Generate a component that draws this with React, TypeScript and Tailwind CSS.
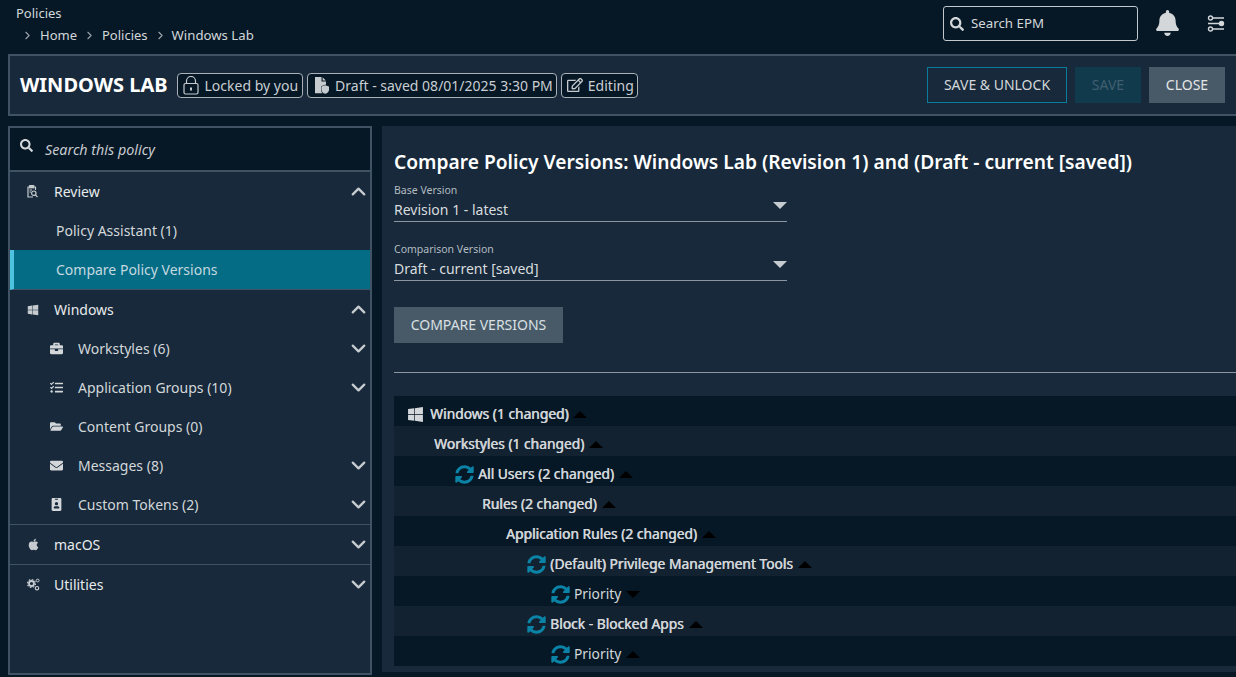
import React from "react";
import { ChevronUp, ChevronDown, ChevronRight } from "lucide-react";
import { FaWindows, FaApple, FaSyncAlt, FaBell, FaBriefcase, FaFolderOpen, FaEnvelope, FaIdBadge, FaTasks, FaSearch, FaRegEdit } from "react-icons/fa";

const FileShield = () => (
  <svg width="15" height="17" viewBox="0 0 15 17" fill="#c6cbcf">
    <path d="M1 0h6.500v4.500H12V7.400L7 9.200v3.200c0 1.700.700 3 1.700 3.900H1z" />
    <path d="M8.600 0.200L11.800 3.400H8.600z" />
    <path d="M11.200 8.200l3.800 1.400v2.800c0 2-1.500 3.600-3.800 4.400-2.300-.800-3.800-2.400-3.800-4.400V9.600z" />
  </svg>
);

const LockIcon = () => (
  <svg width="16" height="19" viewBox="0 0 16 19" fill="none" stroke="#c6cbcf" strokeWidth="1.200">
    <rect x="1" y="7.500" width="14" height="10.500" rx="1.500" />
    <path d="M3.500 7.500V5a4.500 4.500 0 0 1 9 0v2.500" />
    <path d="M8 11.500v3" strokeWidth="2" />
  </svg>
);

const ReviewIcon = () => (
  <svg width="11" height="13" viewBox="0 0 11 13" fill="none" stroke="#c6cbcf" strokeWidth="1.200">
    <path d="M6 12H1V2h7.500v3" />
    <rect x="2.700" y="0.500" width="4" height="2.300" fill="#c6cbcf" />
    <path d="M2.500 5H5M2.500 7H4" strokeWidth="1" />
    <circle cx="6.800" cy="8.200" r="2.200" />
    <path d="M8.400 9.800L10.500 12" />
  </svg>
);

const GearsIcon = () => (
  <svg width="13" height="13" viewBox="0 0 13 13" fill="none" stroke="#c6cbcf">
    <circle cx="4.500" cy="5.500" r="2.500" strokeWidth="1.800" />
    <circle cx="4.500" cy="5.500" r="4" strokeWidth="1.200" strokeDasharray="1.600 1.500" />
    <circle cx="10.700" cy="2.500" r="1.400" strokeWidth="1" />
    <circle cx="10" cy="10.200" r="1.700" strokeWidth="1.200" />
  </svg>
);

const Sync = () => <FaSyncAlt className="text-[#0b83a6] w-[19px] h-[19px] shrink-0" />;

const Caret = ({ up = true }: { up?: boolean }) => (
  <span className={up ? "ml-[5px] w-0 h-0 border-x-[7px] border-x-transparent border-b-[7px] border-b-black" : "ml-[5px] w-0 h-0 border-x-[7px] border-x-transparent border-t-[7px] border-t-black"} />
);

const Badge = ({ icon, text, tight }: { icon: React.ReactNode; text: string; tight?: boolean }) => (
  <div className={(tight ? "pr-[3px] " : "pr-[4px] ") + "h-[25px] flex items-center gap-[5px] pl-[5px] bg-[#061726] border border-[#aab1b7] rounded-[4px] text-[14px] text-[#c9ced2]"}>
    {icon}
    <span>{text}</span>
  </div>
);

const Chevron = ({ up }: { up?: boolean }) =>
  up ? (
    <ChevronUp size={23} strokeWidth={2.400} className="text-[#c6cbcf]" />
  ) : (
    <ChevronDown size={23} strokeWidth={2.400} className="text-[#c6cbcf]" />
  );

const Section = ({ icon, label, open }: { icon: React.ReactNode; label: string; open?: boolean }) => (
  <div className="h-[39px] flex items-center text-[14px] text-[#e8ebed]">
    <span className="w-[44px] pl-[17px] flex justify-start text-[#c6cbcf]">{icon}</span>
    <span className="flex-1">{label}</span>
    <Chevron up={open} />
  </div>
);

const Item = ({ icon, label, chevron }: { icon: React.ReactNode; label: string; chevron?: boolean }) => (
  <div className="h-[39px] flex items-center text-[14px] text-[#d3d7da]">
    <span className="w-[68px] pl-[40px] flex text-[#d3d7da]">{icon}</span>
    <span className="flex-1">{label}</span>
    {chevron && <Chevron />}
  </div>
);

const rows: { pad: string; label: string; sync?: boolean; win?: boolean; bold?: boolean; up?: boolean }[] = [
  { pad: "pl-[13px]", label: "Windows (1 changed)", win: true, bold: true, up: true },
  { pad: "pl-[40px]", label: "Workstyles (1 changed)", bold: true, up: true },
  { pad: "pl-[61px]", label: "All Users (2 changed)", sync: true, bold: true, up: true },
  { pad: "pl-[88px]", label: "Rules (2 changed)", bold: true, up: true },
  { pad: "pl-[112px]", label: "Application Rules (2 changed)", bold: true, up: true },
  { pad: "pl-[133px]", label: "(Default) Privilege Management Tools", sync: true, bold: true, up: true },
  { pad: "pl-[157px]", label: "Priority", sync: true, up: false },
  { pad: "pl-[133px]", label: "Block - Blocked Apps", sync: true, bold: true, up: true },
  { pad: "pl-[157px]", label: "Priority", sync: true, up: true },
];

const Select = ({ label, value }: { label: string; value: string }) => (
  <div className="w-[393px] border-b border-[#8b96a0] relative h-[38px]">
    <div className="text-[10.500px] leading-[13px] h-[16px] text-[#b4bbc1]">{label}</div>
    <div className="text-[14px] leading-[20px] text-[#d9dcdf]">{value}</div>
    <span className="absolute right-0 top-[18px] w-0 h-0 border-x-[7px] border-x-transparent border-t-[7px] border-t-[#c6cbcf]" />
  </div>
);

export default function App() {
  return (
    <div className="w-[1236px] h-[677px] overflow-hidden bg-[#061726] flex flex-col" style={{ fontFamily: '"Noto Sans", sans-serif' }}>
      <header className="h-[54px] shrink-0 flex justify-between pl-[16px]">
        <div className="text-[13px] text-[#d3d7da]">
          <div className="pt-[4px] leading-[18px]">Policies</div>
          <div className="flex items-center pl-[5px] pt-[3px] leading-[20px]">
            <ChevronRight size={13} className="text-[#9aa3ab]" />
            <span className="ml-[6px]">Home</span>
            <ChevronRight size={13} className="ml-[6px] text-[#9aa3ab]" />
            <span className="ml-[6px]">Policies</span>
            <ChevronRight size={13} className="ml-[6px] text-[#9aa3ab]" />
            <span className="ml-[5px] text-[13.200px]">Windows Lab</span>
          </div>
        </div>
        <div className="flex items-start">
          <div className="mt-[6px] w-[195px] h-[35px] border border-[#c3c8cc] rounded-[3px] flex items-center pl-[6px] gap-[7px] text-[13.300px] text-[#d3d7da]">
            <FaSearch className="w-[14px] h-[14px] text-[#d3d7da]" />
            <span>Search EPM</span>
          </div>
          <FaBell className="ml-[18px] mt-[10px] w-[23px] h-[26px] text-[#d3d7da]" />
          <svg className="ml-[28px] mt-[15px]" width="18" height="17" viewBox="0 0 18 17" fill="none" stroke="#d3d7da" strokeWidth="1.400">
            <path d="M6 3h11M1 8.500h11M6 14h11" />
            <circle cx="3.500" cy="3" r="2" fill="#061726" />
            <circle cx="14.500" cy="8.500" r="2" fill="#d3d7da" />
            <circle cx="3.500" cy="14" r="2" fill="#061726" />
          </svg>
          <div className="w-[11px]" />
        </div>
      </header>

      <div className="ml-[8px] h-[62px] shrink-0 bg-[#17293a] border-y-2 border-l-2 border-[#3f5364] flex items-center justify-between pl-[10px]">
        <div className="flex items-center">
          <h1 className="text-[20px] font-bold text-white mr-[9px]">WINDOWS LAB</h1>
          <div className="flex gap-[4px]">
            <Badge icon={<span className="w-[17px] flex justify-center"><LockIcon /></span>} text="Locked by you" />
            <Badge tight icon={<span className="w-[17px] flex justify-center"><FileShield /></span>} text="Draft - saved 08/01/2025 3:30 PM" />
            <Badge tight icon={<FaRegEdit className="w-[16px] h-[16px] text-[#c6cbcf]" />} text="Editing" />
          </div>
        </div>
        <div className="flex items-center text-[14px] mr-[11px]">
          <div className="h-[36px] w-[140px] pb-[1px] flex items-center justify-center border border-[#0b7c9c] text-[#d3d7da]">SAVE &amp; UNLOCK</div>
          <div className="h-[36px] w-[66px] pb-[1px] ml-[8px] flex items-center justify-center bg-[#123a4d] text-[#3f5f70]">SAVE</div>
          <div className="h-[36px] w-[76px] pb-[1px] ml-[8px] flex items-center justify-center bg-[#485a68] text-[#e3e6e8]">CLOSE</div>
        </div>
      </div>

      <div className="flex mt-[10px] ml-[8px] flex-1 min-h-0 items-start">
        <aside className="w-[364px] h-[549px] shrink-0 border-2 border-[#3f5364] bg-[#17293a]">
          <div className="h-[44px] bg-[#061726] border-b-2 border-[#3f5364] flex items-start pt-[11px] pl-[10px] text-[14.300px] italic text-[#c6cbcf]">
            <FaSearch className="w-[13px] h-[13px] text-[#d3d7da]" />
            <span className="ml-[12px] pt-[1px] leading-[20px]">Search this policy</span>
          </div>
          <Section icon={<ReviewIcon />} label="Review" open />
          <div className="h-[39px] flex items-center pl-[46px] text-[14px] text-[#d3d7da]">Policy Assistant (1)</div>
          <div className="h-[40px] flex items-center pl-[42px] text-[14px] text-[#c4d9e0] bg-[#056c85] border-l-[4px] border-[#4ec3e0] border-b border-b-[#3f5364]">Compare Policy Versions</div>
          <Section icon={<FaWindows size={12} />} label="Windows" open />
          <Item icon={<FaBriefcase size={13} />} label="Workstyles (6)" chevron />
          <Item icon={<FaTasks size={13} />} label="Application Groups (10)" chevron />
          <Item icon={<FaFolderOpen size={13} />} label="Content Groups (0)" />
          <Item icon={<FaEnvelope size={13} />} label="Messages (8)" chevron />
          <div className="border-b border-[#3f5364]">
            <Item icon={<FaIdBadge size={13} />} label="Custom Tokens (2)" chevron />
          </div>
          <div className="border-b border-[#3f5364]">
            <Section icon={<FaApple size={13} />} label="macOS" />
          </div>
          <Section icon={<GearsIcon />} label="Utilities" />
        </aside>

        <main className="ml-[10px] flex-1 h-[546px] bg-[#17293a] pl-[12px]">
          <h2 className="text-[19.200px] font-semibold text-white leading-[26px] mt-[23px] whitespace-nowrap">Compare Policy Versions: Windows Lab (Revision 1) and (Draft - current [saved])</h2>
          <div className="mt-[9px]"><Select label="Base Version" value="Revision 1 - latest" /></div>
          <div className="mt-[21px]"><Select label="Comparison Version" value="Draft - current [saved]" /></div>
          <div className="mt-[26px] w-[169px] h-[36px] pb-[1px] bg-[#485a68] flex items-center justify-center text-[14px] text-[#d9e0e4]">COMPARE VERSIONS</div>
          <div className="mt-[29px] h-px bg-[#8b96a0]" />
          <div className="mt-[23px]">
            {rows.map((r, i) => (
              <div key={i} className={(i % 2 === 0 ? "bg-[#061726] " : "bg-[#132231] ") + "h-[30px] pt-[6px] flex items-center text-[13.800px] text-[#d3d7da] " + r.pad + (r.bold ? " [text-shadow:0.6px_0_0_#d3d7da]" : "")}>
                {r.win && <FaWindows className="w-[17px] h-[17px] mr-[6px] text-[#d3d7da]" />}
                {r.sync && <span className="mr-[4px] flex"><Sync /></span>}
                <span>{r.label}</span>
                <Caret up={r.up} />
              </div>
            ))}
          </div>
        </main>
      </div>
    </div>
  );
}
